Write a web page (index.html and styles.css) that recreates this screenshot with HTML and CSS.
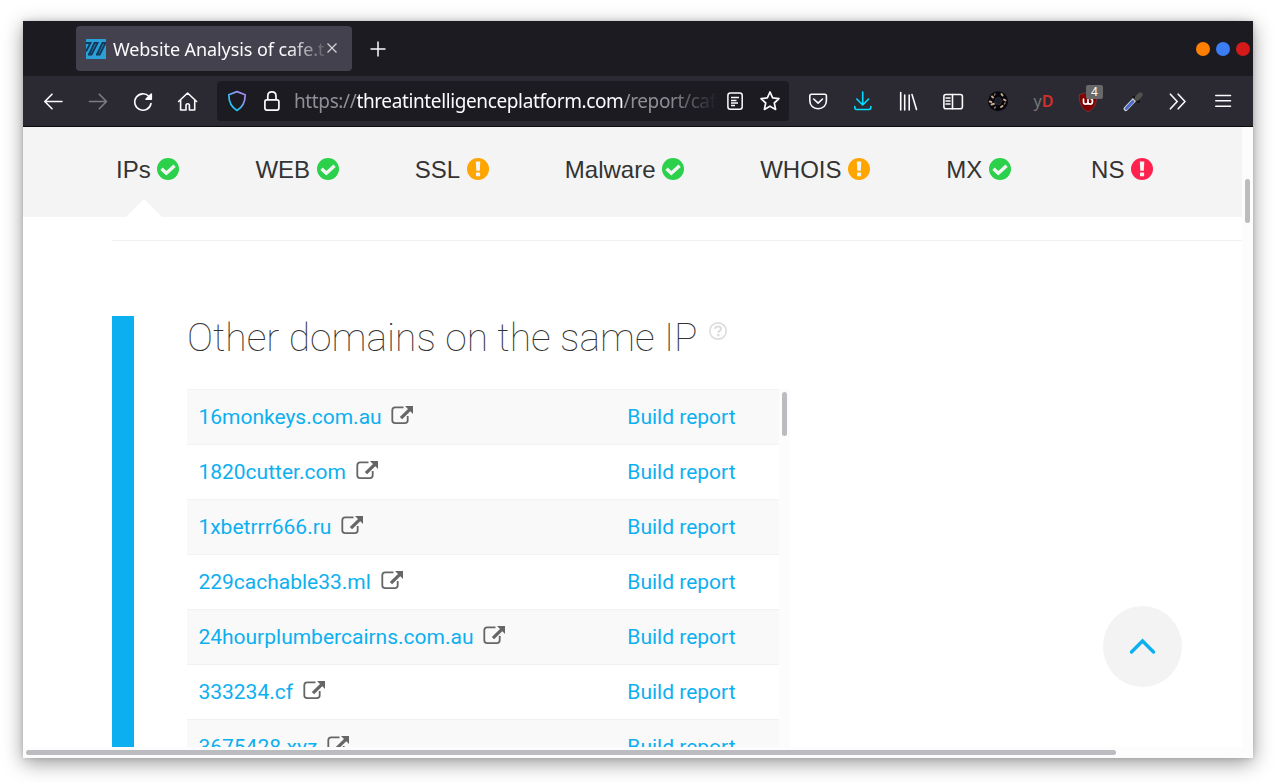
FILE: index.html
```html
<!DOCTYPE html>
<html lang="en">
<head>
<meta charset="utf-8">
<title>Website Analysis</title>
<link rel="stylesheet" href="styles.css">
</head>
<body>
<svg class="defs" width="0" height="0">
  <defs>
    <linearGradient id="shieldg" x1="0" y1="1" x2="1" y2="0"><stop offset="0.25" stop-color="#22c8f5"/><stop offset="0.8" stop-color="#a08cf0"/></linearGradient>
    <symbol id="ok" viewBox="0 0 22 22"><circle cx="11" cy="11" r="11" fill="#2bd04b"/><path d="M4.500 10.800l4.800 4.500L17.600 7.800" fill="none" stroke="#f4f4f4" stroke-width="3.400"/></symbol>
    <symbol id="bang" viewBox="0 0 22 22"><circle cx="11" cy="11" r="11"/><path d="M8.800 3.600h4.500l-.5 9.200h-3.500zM9 14.500h4.100v3.800H9z" fill="#f4f4f4"/></symbol>
    <symbol id="ext" viewBox="0 0 23 20"><path d="M12.5 2.400H4.200Q1.300 2.400 1.300 5.300v9.900Q1.300 18.100 4.200 18.100h9.600Q16.700 18.100 16.700 15.200V11" fill="none" stroke="#666" stroke-width="1.800"/><path d="M14 1h8v8l-2.700-2.700-8.200 7.900-2.300-2.300L17 4z" fill="#666"/></symbol>
  </defs>
</svg>
<div class="window">
  <div class="tabs">
    <div class="tab">
      <svg class="favicon" width="20" height="20" viewBox="0 0 20 20"><path fill="#2a9fd8" d="M0 0h20v20H0z"/><path d="M0 4h4.500L0 12.500M3 15.500L8.500 4h3L5.500 15.500H2M11 15.500L16.500 4h3l-5.800 11.500H10" fill="none" stroke="#12395a" stroke-width="1.900"/></svg>
      <span class="tab-title">Website Analysis of cafe.th</span>
      <svg class="close" width="12" height="12" viewBox="0 0 12 12"><path d="M1.500 1.500l9 9M10.500 1.500l-9 9" stroke="#d6d6da" stroke-width="1.200"/></svg>
    </div>
    <svg class="plus" width="16" height="16" viewBox="0 0 16 16"><path d="M.5 8h15M8 .5v15" stroke="#fbfbfe" stroke-width="1.500"/></svg>
    <div class="dots"><i class="dot orange"></i><i class="dot blue"></i><i class="dot red"></i></div>
  </div>
  <div class="toolbar">
    <div class="buttons">
      <svg class="tool" viewBox="0 0 23 24"><path d="M20 12.500H3M10 5.200l-7.200 7.300 7.200 7.300"/></svg>
      <svg class="tool dim" viewBox="0 0 23 24"><path d="M2.500 12.500H19M12.300 5.200l7.200 7.300-7.200 7.300"/></svg>
      <svg class="tool" viewBox="0 0 23 24"><path d="M17 7.500A8.200 8.200 0 1 0 19 14.500"/><path class="solid" d="M19.300 5v5.300H14z"/></svg>
      <svg class="tool" viewBox="0 0 23 24"><path d="M1.600 12.500l9-8.500 9 8.500M3.600 11v10H9v-4.500q0-1.800 1.700-1.800t1.700 1.800V21h5.300V11"/></svg>
    </div>
    <div class="url">
      <svg class="shield" width="20" height="22" viewBox="0 0 20 22"><path d="M10 1.600l8.200 3.200c0 7-2.200 12.200-8.200 15.700-6-3.500-8.200-8.700-8.200-15.700z" fill="none" stroke="url(#shieldg)" stroke-width="1.700" stroke-linejoin="round"/></svg>
      <svg class="lock" width="18" height="22" viewBox="0 0 18 22"><rect x="1.900" y="9.800" width="14" height="10.300" rx="2"/><path d="M4.800 9.800V6q0-4.200 4.100-4.200T13 6v3.800"/></svg>
      <span class="address">https://<b>threatintelligenceplatform.com</b>/report/caf</span>
      <svg class="reader" width="18" height="20" viewBox="0 0 18 20"><rect x="1.900" y="1.900" width="14.300" height="16.400" rx="2.500"/><path d="M5 6.500h8M5 9.500h5.500M5 12h7M5 14.500h4"/></svg>
      <svg class="star" width="22" height="22" viewBox="0 0 22 22"><path d="M11 2l2.700 5.900 6.300.8-4.700 4.300 1.300 6.400-5.600-3.200-5.600 3.200 1.300-6.400L2 8.700l6.300-.8z"/></svg>
    </div>
    <div class="buttons extensions">
      <svg class="tool" viewBox="0 0 23 24"><path d="M4.500 5.300h13.200q1.700 0 1.700 1.700v4.500c0 5-3.500 8.200-8.300 8.200s-8.300-3.200-8.300-8.200V7q0-1.700 1.700-1.700z"/><path d="M6.700 10l4.400 4.200L15.500 10"/></svg>
      <svg class="tool cyan" viewBox="0 0 23 24"><path d="M10.700 3v12.800M4.800 10l5.900 6 5.900-6M2.800 17.500v1q0 2 2 2h12q2 0 2-2v-1"/></svg>
      <svg class="tool" viewBox="0 0 23 24"><path d="M3.700 3.500V21M7.700 6v15M12.200 6v15M15 5.500l4.500 15"/></svg>
      <svg class="tool" viewBox="0 0 23 24"><rect x="1.900" y="5.500" width="18.500" height="14.300" rx="2"/><path d="M10.500 5.500v14.300M4 9h4M4 12h4M4 15h4"/></svg>
      <svg class="tool" viewBox="0 0 23 24"><circle cx="11" cy="12.200" r="10" fill="#07070f" stroke="none"/><g stroke="#c9ac88" stroke-width="2"><path d="M5 7.500l1 1M14.500 5l1 1.500M17 10.500l1.500 1M2.800 12.500l1.500.5M4.500 15.500l2.500-.8M14 18l1.500-1"/></g><path d="M8 5l-.5 1M7.500 19l1-1M17.500 15l.5-1" stroke="#8a7660" stroke-width="1.500"/><path d="M8.500 9.500l4-1 2.500 3-2 4-4.500-.5z" fill="#1c1c24" stroke="#2c2c34" stroke-width="1"/></svg>
      <span class="yd">y<b>D</b></span>
      <span class="ublock"><svg class="tool" viewBox="0 0 23 24"><path d="M11 3.500l8.800 2.500c0 8-2 13-8.800 16.800C4.200 19 2.200 14 2.200 6z" fill="#800000" stroke="#80383d" stroke-width=".8"/><path d="M6.500 10v3q0 2.200 2.200 2.200T11 13v-2.500V13q0 2.200 2.200 2.200T15.500 12.500 13.500 9.500" stroke="#fff" stroke-width="1.700"/></svg><em class="badge">4</em></span>
      <svg class="tool" viewBox="0 0 23 24"><path d="M3.800 19.800L13 10" stroke="#c7cbd6" stroke-width="4.500" stroke-linecap="round"/><path d="M4.300 19.500l6.500-7" stroke="#4967cd" stroke-width="2.600"/><path d="M12 8l4.500 4.500" stroke="#111" stroke-width="3"/><path d="M15 9.300l3.300-3.500" stroke="#50504c" stroke-width="5" stroke-linecap="round"/></svg>
      <svg class="tool" viewBox="0 0 23 24"><path d="M3.400 5.200l6.800 7.300-6.800 7.300M11.200 5.200l6.800 7.300-6.800 7.300"/></svg>
      <svg class="tool" viewBox="0 0 23 24"><path d="M3.800 6.500h14.700M3.800 11.700h14.700M3.800 17.200h14.700"/></svg>
    </div>
  </div>
  <div class="view">
    <main class="page">
      <nav class="nav">
        <a class="nav-item current">IPs<svg class="status"><use href="#ok"/></svg></a>
        <a class="nav-item">WEB<svg class="status"><use href="#ok"/></svg></a>
        <a class="nav-item">SSL<svg class="status warn"><use href="#bang"/></svg></a>
        <a class="nav-item">Malware<svg class="status"><use href="#ok"/></svg></a>
        <a class="nav-item">WHOIS<svg class="status warn"><use href="#bang"/></svg></a>
        <a class="nav-item">MX<svg class="status"><use href="#ok"/></svg></a>
        <a class="nav-item last">NS<svg class="status bad"><use href="#bang"/></svg></a>
      </nav>
      <hr class="rule">
      <section class="section">
        <h1 class="title"><span class="title-text">Other domains on the same IP</span><svg class="help" width="20" height="20" viewBox="0 0 20 20"><circle cx="10" cy="10" r="8.200" fill="none" stroke="#ddd" stroke-width="1.700"/><path d="M7 7.800Q7.300 5.500 10 5.500q3 0 3 2.300 0 1.300-1.500 2.100-1.200.7-1.200 1.900" fill="none" stroke="#ddd" stroke-width="2.200"/><path d="M9 13h2.500v2.200H9z" fill="#ddd"/></svg></h1>
        <div class="scroller">
          <div class="list">
            <div class="row"><a>16monkeys.com.au</a><svg class="ext"><use href="#ext"/></svg><a class="build">Build report</a></div>
            <div class="row"><a>1820cutter.com</a><svg class="ext"><use href="#ext"/></svg><a class="build">Build report</a></div>
            <div class="row"><a>1xbetrrr666.ru</a><svg class="ext"><use href="#ext"/></svg><a class="build">Build report</a></div>
            <div class="row"><a>229cachable33.ml</a><svg class="ext"><use href="#ext"/></svg><a class="build">Build report</a></div>
            <div class="row"><a>24hourplumbercairns.com.au</a><svg class="ext"><use href="#ext"/></svg><a class="build">Build report</a></div>
            <div class="row"><a>333234.cf</a><svg class="ext"><use href="#ext"/></svg><a class="build">Build report</a></div>
            <div class="row"><a>3675428.xyz</a><svg class="ext"><use href="#ext"/></svg><a class="build">Build report</a></div>
          </div>
          <div class="vtrack inner"><div class="thumb"></div></div>
        </div>
      </section>
    </main>
    <div class="vtrack outer"><div class="thumb"></div></div>
    <button class="top"><svg width="28" height="18" viewBox="0 0 28 18"><path d="M2.500 14L13.500 3l11 11" fill="none" stroke="#0cb0f0" stroke-width="3.400" stroke-linecap="round"/></svg></button>
  </div>
  <div class="htrack"><div class="hthumb"></div></div>
</div>
</body>
</html>
```
FILE: styles.css
```css
* { box-sizing: border-box; }
body { margin: 0; padding: 21px 23px 25px; height: 783px; background: #fff; overflow: hidden; }
svg { flex: none; display: block; }
.defs { position: absolute; }
.window { width: 1230px; height: 737px; display: flex; flex-direction: column; background: #fff; box-shadow: 0 5px 19px rgba(0,0,0,.4), 0 0 5px rgba(0,0,0,.15); }

.tabs { height: 55px; flex: none; background: #1c1b22; display: flex; align-items: center; padding: 0 3px 0 53px; font-family: "Noto Sans", sans-serif; }
.tab { width: 276px; height: 45px; border-radius: 4px; background: #42414d; display: flex; align-items: center; padding: 0 14px 0 10px; }
.tab-title { margin-left: 7px; width: 211px; height: 30px; line-height: 30px; overflow: hidden; white-space: nowrap; font-size: 18px; letter-spacing: -.08px; color: #fbfbfe; -webkit-mask-image: linear-gradient(90deg, #000 175px, transparent 218px); mask-image: linear-gradient(90deg, #000 175px, transparent 218px); }
.close { margin: 0 0 2px 2px; }
.plus { margin-left: 18px; }
.dots { display: flex; gap: 6px; margin: 0 0 0 auto; }
.dot { width: 14px; height: 14px; border-radius: 50%; }
.orange { background: #ff8000; }
.blue { background: #3a7df5; }
.red { background: #d51a1a; }

.toolbar { height: 51px; flex: none; background: #2b2a33; border-bottom: 1px solid #0c0c0d; display: flex; align-items: center; padding-left: 8px; font-family: "Noto Sans", sans-serif; }
.buttons { display: grid; grid-auto-flow: column; grid-auto-columns: 45px; align-items: center; justify-items: center; }
.extensions { margin-left: 7px; }
.tool { width: 23px; height: 24px; fill: none; stroke: #fbfbfe; stroke-width: 1.6; stroke-linejoin: round; stroke-linecap: round; }
.solid { fill: #fbfbfe; }
.dim { stroke: #7d7c83; }
.cyan { stroke: #00ddff; }
.yd { color: #77777a; font: 16px/26px "Noto Sans", sans-serif; }
.yd b { color: #d52e2b; font-weight: 600; }
.ublock { position: relative; }
.badge { position: absolute; left: 9px; top: -4px; width: 17px; height: 14px; border-radius: 2px; background: #686868; color: #fff; font: 12px/14px "Noto Sans", sans-serif; text-align: center; }
.url { margin-left: 6px; width: 572px; height: 40px; border-radius: 4px; background: #1c1b22; display: flex; align-items: center; padding: 0 8px 0 10px; }
.lock, .reader, .star { fill: none; stroke: #fbfbfe; stroke-width: 1.7; stroke-linejoin: round; }
.lock { margin-left: 16px; }
.address { margin-left: 13px; width: 422px; overflow: hidden; white-space: nowrap; font-size: 19px; line-height: 30px; letter-spacing: -.38px; color: #8f8f96; -webkit-mask-image: linear-gradient(90deg, #000 375px, transparent 424px); mask-image: linear-gradient(90deg, #000 375px, transparent 424px); }
.address b { font-weight: 400; color: #fbfbfe; }
.reader { margin-left: 10px; stroke-width: 1.5; }
.star { margin-left: 15px; }

.view { height: 620px; flex: none; display: flex; position: relative; overflow: hidden; }
.page { width: 1219px; overflow: hidden; }
.nav { height: 90px; background: #f4f4f4; display: flex; gap: 76.2px; padding-left: 93px; font: 24px/86px "Liberation Sans", Arial, sans-serif; color: #333; }
.nav-item { display: flex; position: relative; height: 90px; }
.nav-item.last { margin-left: 4.2px; }
.status { width: 22px; height: 22px; margin: 31px 0 0 6.5px; }
.warn { fill: #ffa500; }
.bad { fill: #ff224f; }
.current::after { content: ""; position: absolute; left: 10px; bottom: 0; border: 18px solid transparent; border-top: 0; border-bottom-color: #fff; }
.rule { border: 0; height: 1px; margin: 23px 0 0 89px; background: #f2f2f2; }
.section { margin: 75px 0 0 89px; height: 500px; border-left: 22px solid #0cb0f0; padding-left: 53px; }
.title { margin: 0; height: 73px; display: flex; color: #333; font: 100 39px/44px Roboto, sans-serif; }
.title-text { white-space: nowrap; }
.help { margin: 5px 0 0 10px; }
.scroller { display: flex; width: 603px; }
.list { width: 592px; font: 21px/54px Roboto, sans-serif; color: #0cb0f0; }
.row { height: 55px; display: flex; padding: 0 43.4px 0 11.4px; border-top: 1px solid #f2f2f2; }
.row:nth-child(odd) { background: #f9f9f9; }
.ext { width: 23px; height: 20px; margin: 15px 0 0 9.7px; }
.build { margin-left: auto; }
.vtrack { width: 11px; background: #fcfcfc; }
.thumb { width: 5px; height: 44px; margin-left: 3px; border-radius: 3px; background: #bbbcc0; }
.inner { padding-top: 3px; }
.outer { padding-top: 52px; }
.top { position: absolute; left: 1080px; top: 479px; width: 79px; height: 81px; padding: 0; border: 0; border-radius: 50%; background: #f3f3f3; display: flex; align-items: center; justify-content: center; }
.htrack { height: 11px; background: #fcfcfc; padding: 3px; }
.hthumb { width: 1090px; height: 5px; border-radius: 3px; background: #bbbcc0; }
```
